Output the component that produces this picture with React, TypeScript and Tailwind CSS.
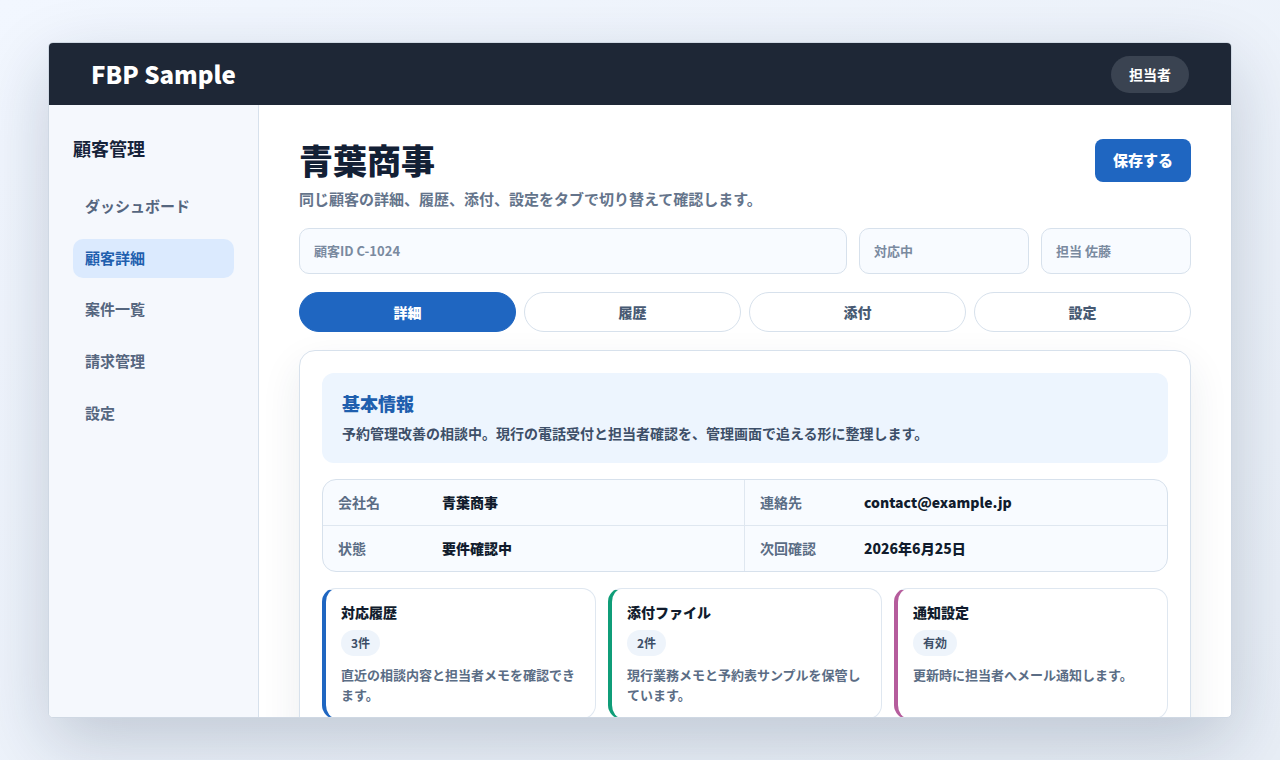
const navItems = ["ダッシュボード", "顧客詳細", "案件一覧", "請求管理", "設定"];
const tabs = ["詳細", "履歴", "添付", "設定"];

const summaryCards = [
  {
    title: "対応履歴",
    badge: "3件",
    text: "直近の相談内容と担当者メモを確認できます。",
    border: "border-l-[#1f66c1]",
  },
  {
    title: "添付ファイル",
    badge: "2件",
    text: "現行業務メモと予約表サンプルを保管しています。",
    border: "border-l-[#0f9d78]",
  },
  {
    title: "通知設定",
    badge: "有効",
    text: "更新時に担当者へメール通知します。",
    border: "border-l-[#b55c9c]",
  },
];

function InfoCell({ label, value, first, bottom }: { label: string; value: string; first?: boolean; bottom?: boolean }) {
  return (
    <div
      className={`flex items-center px-[15px] ${first ? "border-r border-[#dfe7f0]" : ""} ${
        bottom ? "h-[45px]" : "h-[46px] border-b border-[#dfe7f0]"
      }`}
    >
      <span className="w-[104px] text-[14px] font-bold text-[#5b6d85]">{label}</span>
      <span className="text-[14px] font-extrabold text-[#111c2d]">{value}</span>
    </div>
  );
}

export default function App() {
  return (
    <div className="h-[760px] w-[1280px] overflow-hidden bg-gradient-to-br from-[#f2f7ff] to-[#e8eef6] px-[48px] py-[42px] font-['Noto_Sans_CJK_JP',sans-serif]">
      <div className="flex h-[676px] flex-col overflow-hidden rounded-[5px] border border-[#cfd8e3] bg-white shadow-[0_24px_70px_rgba(15,35,65,0.2)]">
        {/* Header */}
        <header className="flex h-[62px] shrink-0 items-center justify-between bg-[#1e2736] px-[42px]">
          <span className="text-[24px] font-extrabold text-white">FBP Sample</span>
          <span className="flex h-[37px] w-[78px] items-center justify-center rounded-full bg-[#3a4351] text-[14px] font-bold text-white">
            担当者
          </span>
        </header>

        <div className="flex min-h-0 flex-1">
          {/* Sidebar */}
          <aside className="w-[210px] shrink-0 border-r border-[#d7e1ec] bg-[#f5f8fd] px-[24px] pt-[29px]">
            <h2 className="text-[18px] font-bold leading-[28px] text-[#15233a]">顧客管理</h2>
            <nav className="mt-[25px] flex flex-col gap-[12.6px]">
              {navItems.map((item) => (
                <div
                  key={item}
                  className={`flex h-[39px] items-center rounded-[10px] px-[12px] text-[15px] font-bold ${
                    item === "顧客詳細" ? "bg-[#dbeafe] text-[#1f5fae]" : "text-[#55667f]"
                  }`}
                >
                  {item}
                </div>
              ))}
            </nav>
          </aside>

          {/* Main */}
          <main className="min-w-0 flex-1 overflow-hidden px-[40px] pt-[34px]">
            <div className="flex items-start justify-between">
              <div>
                <h1 className="text-[34px] font-extrabold leading-[42px] text-[#132035]">青葉商事</h1>
                <p className="mt-[7px] text-[15px] font-bold leading-[22px] text-[#64748b]">
                  同じ顧客の詳細、履歴、添付、設定をタブで切り替えて確認します。
                </p>
              </div>
              <button className="h-[43px] w-[96px] rounded-[8px] bg-[#1f66c1] text-[15px] font-extrabold text-white">
                保存する
              </button>
            </div>

            <div className="mt-[18px] grid grid-cols-[548px_170px_150px] gap-[12px]">
              {["顧客ID C-1024", "対応中", "担当 佐藤"].map((field) => (
                <div
                  key={field}
                  className="flex h-[46px] items-center rounded-[10px] border border-[#d7e1ec] bg-[#f8fbff] px-[14px] text-[13px] font-bold text-[#7a8a9f]"
                >
                  {field}
                </div>
              ))}
            </div>

            <div className="mt-[18px] grid grid-cols-4 gap-[8px]">
              {tabs.map((tab, i) => (
                <div
                  key={tab}
                  className={`flex h-[40px] items-center justify-center rounded-full border text-[14px] font-extrabold ${
                    i === 0 ? "border-[#1f66c1] bg-[#1f66c1] text-white" : "border-[#d7e1ec] bg-white text-[#475a73]"
                  }`}
                >
                  {tab}
                </div>
              ))}
            </div>

            <section className="mt-[18px] rounded-[16px] border border-[#d7e1ec] bg-white p-[22px] shadow-[0_16px_40px_rgba(30,50,80,0.09)]">
              <div className="h-[90px] rounded-[12px] bg-[#edf5fe] px-[20px] pt-[16px]">
                <h3 className="text-[18px] font-extrabold leading-[28px] text-[#1f5fae]">基本情報</h3>
                <p className="mt-[5px] text-[14px] font-bold leading-[22px] text-[#3d4f68]">
                  予約管理改善の相談中。現行の電話受付と担当者確認を、管理画面で追える形に整理します。
                </p>
              </div>

              <div className="mt-[16px] grid grid-cols-2 overflow-hidden rounded-[14px] border border-[#d7e1ec] bg-[#f8fbff]">
                <InfoCell label="会社名" value="青葉商事" first />
                <InfoCell label="連絡先" value="contact@example.jp" />
                <InfoCell label="状態" value="要件確認中" first bottom />
                <InfoCell label="次回確認" value="2026年6月25日" bottom />
              </div>

              <div className="mt-[16px] grid grid-cols-3 gap-[12px]">
                {summaryCards.map((card) => (
                  <div
                    key={card.title}
                    className={`h-[131px] rounded-[14px] border border-l-4 border-[#dfe7f0] bg-white pl-[15px] pr-[16px] pt-[12px] ${card.border}`}
                  >
                    <h4 className="text-[14px] font-extrabold leading-[22px] text-[#111c2d]">{card.title}</h4>
                    <span className="mt-[7px] flex h-[26px] w-fit items-center rounded-full bg-[#eef4fb] px-[10px] text-[12px] font-bold text-[#3d4f68]">
                      {card.badge}
                    </span>
                    <p className="mt-[8.5px] text-[13px] font-bold leading-[20.8px] text-[#5b6d85]">{card.text}</p>
                  </div>
                ))}
              </div>
            </section>
          </main>
        </div>
      </div>
    </div>
  );
}
